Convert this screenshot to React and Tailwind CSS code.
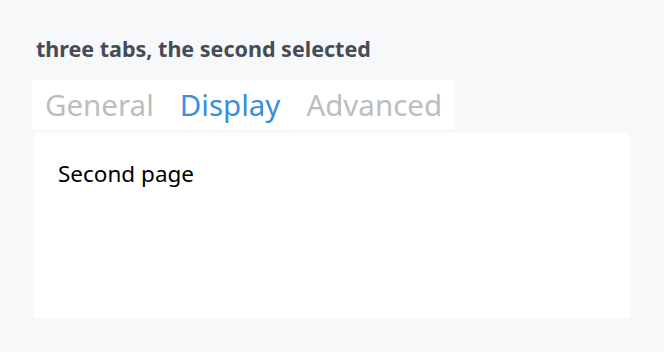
export default function App() {
  const tabs = ["General", "Display", "Advanced"];
  const selected = 1;
  return (
    <div className="h-[352px] w-[664px] bg-[#f7f8fa] pl-8 pt-[34px] font-['Noto_Sans',sans-serif]">
      <h2 className="pl-1 text-[21.5px] leading-[30px] font-bold text-[#454c55]">three tabs, the second selected</h2>
      <div className="mt-4 inline-flex h-[50px] items-center bg-white">
        {tabs.map((tab, i) => (
          <span
            key={tab}
            className={`px-[13px] text-[29.5px] leading-[50px] ${i === selected ? "text-[#3a8ee0]" : "text-[#bdbdbd]"}`}
          >
            {tab}
          </span>
        ))}
      </div>
      <div className="ml-[2px] mt-[3px] h-[185px] w-[596px] bg-white px-6 pt-[26px]">
        <p className="text-[22.5px] leading-[30px] text-black">Second page</p>
      </div>
    </div>
  );
}
